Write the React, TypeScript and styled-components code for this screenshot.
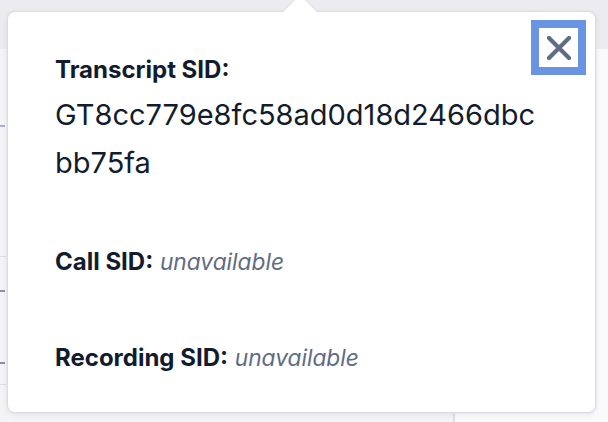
import React from "react";
import styled, { createGlobalStyle } from "styled-components";

const Global = createGlobalStyle`
  html, body { margin: 0; padding: 0; background: #f4f4f6; }
  body { font-family: Inter, "Noto Sans", sans-serif; }
`;

const Page = styled.div`
  position: relative;
  width: 608px;
  height: 422px;
  overflow: hidden;
  display: flex;
  flex-direction: column;
  background: #f4f4f6;
`;

const HeaderBand = styled.div`
  height: 49px;
  flex: none;
  background: #ececf0;
`;

const Body = styled.div`
  flex: 1;
  display: flex;
`;

const LeftPane = styled.div`
  width: 453px;
  flex: none;
  display: flex;
  flex-direction: column;
  background: #f4f4f6;
`;

const RightPane = styled.div`
  flex: 1;
  background: #fafafb;
  border-left: 2px solid #dedee3;
`;

const Row = styled.div<{ $h: number }>`
  height: ${(p) => p.$h}px;
  flex: none;
  border-bottom: 1px solid #dcdce1;
  display: flex;
  flex-direction: column;
`;

const Tick = styled.div<{ $top: number; $color: string }>`
  margin-top: ${(p) => p.$top}px;
  width: 5px;
  height: 2px;
  background: ${(p) => p.$color};
`;

const Popover = styled.div`
  position: absolute;
  left: 7px;
  top: 11px;
  width: 589px;
  height: 402px;
  box-sizing: border-box;
  background: #ffffff;
  border: 1px solid #dcdde4;
  border-radius: 8px;
  box-shadow: 0 0 0 1px rgba(225, 227, 234, 0.6), 0 2px 6px rgba(18, 28, 45, 0.07);
  padding: 40px 48px 0 47px;
  color: #121c2d;
`;

const Arrow = styled.div`
  position: absolute;
  left: 279px;
  top: -13px;
  width: 25px;
  height: 25px;
  background: #ffffff;
  border-top: 1px solid #dcdde4;
  border-left: 1px solid #dcdde4;
  transform: rotate(45deg);
`;

const CloseButton = styled.button`
  position: absolute;
  right: 17px;
  top: 16px;
  width: 39px;
  height: 39px;
  padding: 0;
  border: none;
  background: #ffffff;
  outline: 8px solid #6a93e3;
  display: flex;
  align-items: center;
  justify-content: center;
  cursor: pointer;
`;

const Label = styled.span`
  font-size: 24px;
  line-height: 36px;
  font-weight: 700;
  color: #121c2d;
`;

const Block = styled.div<{ $mt: number }>`
  margin-top: ${(p) => p.$mt}px;
  font-size: 24px;
  line-height: 36px;
`;

const SidValue = styled.div`
  margin-top: 3px;
  font-size: 29px;
  line-height: 48px;
  font-weight: 400;
  color: #121c2d;
  width: 490px;
  word-break: break-all;
`;

const Unavailable = styled.span`
  font-size: 22.7px;
  font-style: italic;
  font-weight: 400;
  color: #606b85;
`;

const CloseIcon = () => (
  <svg width="24" height="24" viewBox="0 0 24 24" fill="none">
    <path d="M2 2 L22 22 M22 2 L2 22" stroke="#606b85" strokeWidth="4.2" strokeLinecap="round" />
  </svg>
);

export default function App() {
  return (
    <>
      <Global />
      <Page>
        <HeaderBand />
        <Body>
          <LeftPane>
            <Row $h={207}>
              <Tick $top={76} $color="#a9aed6" />
            </Row>
            <Row $h={127}>
              <Tick $top={33} $color="#8b90aa" />
              <Tick $top={70} $color="#8b90aa" />
            </Row>
          </LeftPane>
          <RightPane />
        </Body>
        <Popover>
          <Arrow />
          <CloseButton aria-label="Close">
            <CloseIcon />
          </CloseButton>
          <Label>Transcript SID:</Label>
          <SidValue>GT8cc779e8fc58ad0d18d2466dbcbb75fa</SidValue>
          <Block $mt={57}>
            <Label>Call SID:</Label> <Unavailable>unavailable</Unavailable>
          </Block>
          <Block $mt={60}>
            <Label>Recording SID:</Label> <Unavailable>unavailable</Unavailable>
          </Block>
        </Popover>
      </Page>
    </>
  );
}
